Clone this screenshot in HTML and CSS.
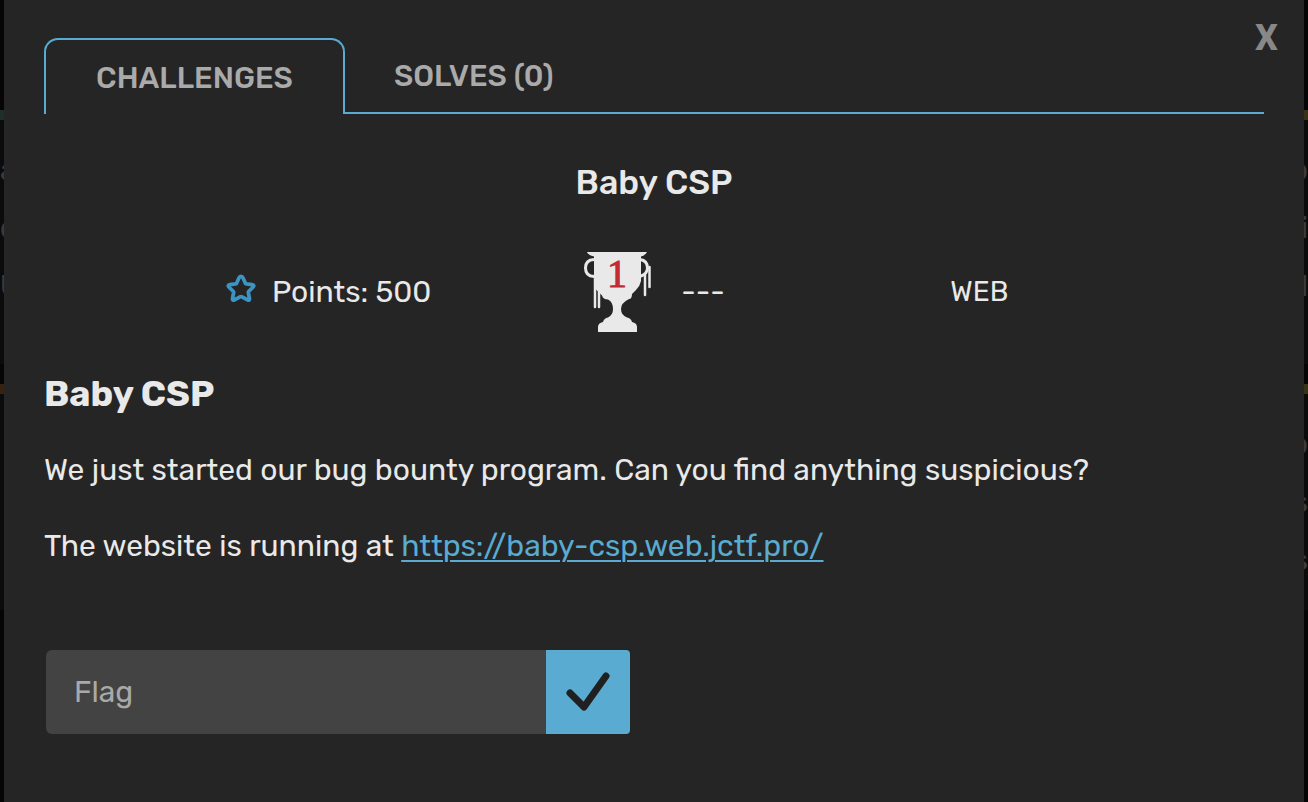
FILE: index.html
```html
<!DOCTYPE html>
<html lang="en">
<head>
<meta charset="utf-8">
<title>Baby CSP</title>
<link rel="stylesheet" href="styles.css">
</head>
<body>
<div class="page">
  <div class="edge edge-left" aria-hidden="true">
    <div class="card card-green"><span>a</span><span>d</span><span>U</span></div>
    <div class="card card-orange"></div>
  </div>
  <main class="modal" role="dialog" aria-label="Baby CSP">
    <button class="close" type="button" aria-label="Close">X</button>
    <div class="tabs" role="tablist">
      <button class="tab tab-active" type="button" role="tab" aria-selected="true">CHALLENGES</button>
      <button class="tab" type="button" role="tab" aria-selected="false">SOLVES (0)</button>
    </div>
    <h1 class="title">Baby CSP</h1>
    <div class="stats">
      <div class="stat stat-points">
        <svg class="star" viewBox="0 0 32 30" aria-hidden="true"><path d="M16 2.5q1.5 0 2.2 1.7l2.4 5.5q.3.8 1.2.9l6 .8q3.2.5 1 2.8l-4.4 4.3q-.6.6-.5 1.4l1.1 6q.5 3-2.1 1.7l-5.9-3.1q-1-.5-2 0l-5.9 3.1q-2.6 1.3-2.1-1.7l1.1-6q.1-.8-.5-1.4l-4.4-4.3q-2.2-2.3 1-2.8l6-.8q.9-.1 1.2-.9l2.4-5.5q.7-1.7 2.2-1.7z"/></svg>
        <span>Points: 500</span>
      </div>
      <div class="stat stat-first">
        <svg class="trophy" viewBox="0 0 68 82" aria-hidden="true">
          <path class="cup" d="M4 1h60q-1 3-6 4.500v24.500q-1 5-5 9l-4 4q0 5-3 5-8 4-8 10 0 6 6 8.500 4 .500 5 4.500 5 1 5 5v5H15v-5q0-4 5-5 1-4 5-4.500 5-2.500 5-8.500 0-7-5-9.500-5 0-6-4l-8-8V5.500Q5 4 4 1z"/>
          <path class="handle" d="M11 8.500Q2.500 9 2.500 17t8.500 8.500M57 8.500q7.500 1 7.500 8.500 0 6-7.500 8.500"/>
          <path class="drip" d="M12 24v32M16 39v17M62 24v20M66.500 16v20"/>
          <text class="rank" x="34" y="36">1</text>
        </svg>
        <span>---</span>
      </div>
      <div class="stat stat-category">WEB</div>
    </div>
    <section class="description">
      <h2>Baby CSP</h2>
      <p>We just started our bug bounty program. Can you find anything suspicious?</p>
      <p>The website is running at <a href="https://baby-csp.web.jctf.pro/">https://baby-csp.web.jctf.pro/</a></p>
    </section>
    <form class="flag-form">
      <input class="flag-input" type="text" placeholder="Flag" aria-label="Flag">
      <button class="submit" type="button" aria-label="Submit flag">
        <svg viewBox="0 0 44 40" aria-hidden="true"><path d="M4 21l14 14L40 4"/></svg>
      </button>
    </form>
  </main>
  <div class="edge edge-right" aria-hidden="true">
    <div class="card card-olive"><span>p</span><span>i</span><span>l</span></div>
    <div class="card card-olive"><span>p</span><span>s</span><span>s</span></div>
  </div>
</div>
</body>
</html>
```
FILE: styles.css
```css
* { box-sizing: border-box; }
body {
  margin: 0;
  background: #050505;
  color: #e9e9e9;
  font: 400 30px/36px Rubik, Roboto, sans-serif;
}
.page {
  display: grid;
  grid-template-columns: 4px minmax(0, 1fr) 4px;
  min-height: 100vh;
}
.edge {
  display: flex;
  flex-direction: column;
  gap: 20px;
  padding-top: 110px;
  overflow: hidden;
}
.edge-right { direction: rtl; }
.card {
  display: flex;
  flex-direction: column;
  gap: 22px;
  height: 254px;
  padding-top: 32px;
  border-top: 10px solid;
  background: #0b0b0b;
  font-weight: 500;
}
.edge .card:last-child { height: 226px; }
.card span { color: #3a3a3a; }
.card-green { border-color: #1c3028; }
.card-orange { border-color: #38220f; }
.card-olive { border-color: #383315; }
.modal {
  position: relative;
  padding: 38px 40px 68px;
  background: #252525;
}
.close {
  position: absolute;
  top: 18px;
  right: 20px;
  padding: 0 6px;
  border: 0;
  background: none;
  color: #888;
  font: 800 36px/40px Roboto, sans-serif;
}
.tabs { display: flex; }
.tabs::after {
  content: "";
  flex: 1;
  border-bottom: 2px solid #59abd1;
}
.tab {
  height: 76px;
  padding: 2px 49px 0;
  border: 0;
  border-bottom: 2px solid #59abd1;
  background: none;
  color: #aaa;
  font: 500 30px/36px Rubik, Roboto, sans-serif;
}
.tab-active {
  min-width: 301px;
  border: 2px solid #59abd1;
  border-bottom: 0;
  border-radius: 14px 14px 0 0;
}
.title {
  margin: 49px 0 0;
  text-align: center;
  font-size: 34px;
  line-height: 40px;
  font-weight: 500;
}
.stats {
  display: grid;
  grid-template-columns: 1fr 1fr 1fr;
  align-items: center;
  width: 80%;
  height: 82px;
  margin: 48px auto 0;
}
.stat {
  display: flex;
  align-items: center;
  justify-content: center;
}
.stat-points { gap: 16px; }
.stat-first { gap: 30px; }
.stat-category { font-size: 28px; }
.star {
  width: 30px;
  height: 28px;
  margin-bottom: 8px;
  fill: none;
  stroke: #3c94c2;
  stroke-width: 4;
  stroke-linejoin: round;
}
.trophy { width: 68px; height: 82px; }
.cup { fill: #e9e9e9; }
.handle { fill: none; stroke: #e9e9e9; stroke-width: 3; }
.drip { fill: none; stroke: #e9e9e9; stroke-width: 2.5; stroke-linecap: round; }
.rank {
  fill: #c22b31;
  stroke: #c22b31;
  stroke-width: 1;
  font: 400 40px "Liberation Serif", serif;
  text-anchor: middle;
}
.description { margin-top: 39px; }
.description h2 {
  margin: 0;
  font-size: 36px;
  line-height: 44px;
  font-weight: 700;
}
.description p { margin: 0; padding-top: 40px; }
.description h2 + p { padding-top: 36px; }
.description a {
  color: #59abd1;
  text-decoration-thickness: 2px;
  text-underline-offset: 4px;
}
.flag-form {
  display: flex;
  width: 100%;
  max-width: 586px;
  height: 84px;
  margin-top: 86px;
  padding-left: 2px;
}
.flag-input {
  flex: 1;
  min-width: 0;
  padding: 0 28px;
  border: 0;
  border-radius: 6px 0 0 6px;
  background: #434343;
  color: #e9e9e9;
  font: 400 30px/36px Rubik, Roboto, sans-serif;
}
.flag-input::placeholder { color: #a9a9a9; opacity: 1; }
.submit {
  display: grid;
  place-items: center;
  width: 84px;
  padding: 0;
  border: 0;
  border-radius: 0 4px 4px 0;
  background: #59abd1;
}
.submit svg {
  width: 44px;
  height: 40px;
  fill: none;
  stroke: #202020;
  stroke-width: 7;
  stroke-linecap: round;
  stroke-linejoin: round;
}
```
